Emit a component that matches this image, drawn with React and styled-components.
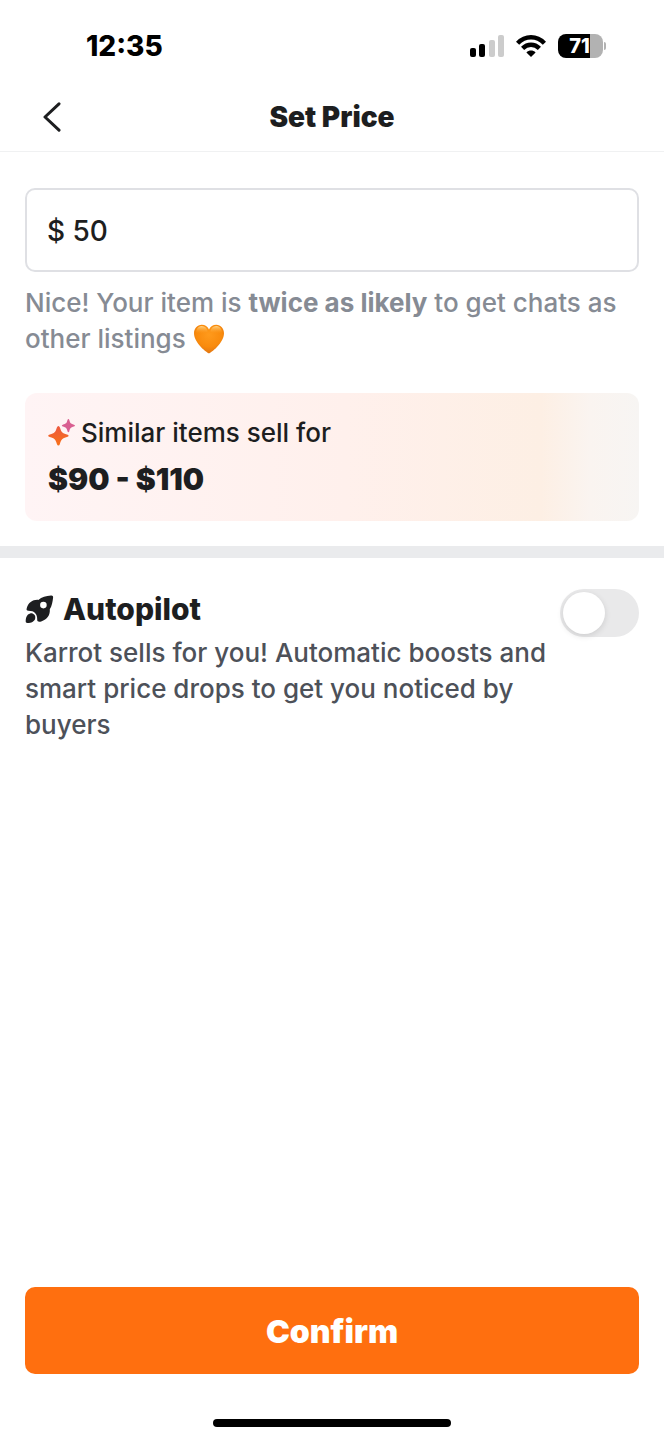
import React, { useState } from "react";
import styled, { createGlobalStyle } from "styled-components";

const GlobalStyle = createGlobalStyle`
  *, *::before, *::after { box-sizing: border-box; }
  body {
    margin: 0;
    background: #fff;
    color: #1d1e20;
    font-family: Inter, "Liberation Sans", sans-serif;
  }
  h1, h2, p { margin: 0; }
  button, input { font: inherit; color: inherit; }
`;

const Screen = styled.div`
  display: flex;
  flex-direction: column;
  min-height: 100vh;
`;

const StatusBar = styled.div`
  display: flex;
  align-items: center;
  justify-content: space-between;
  height: 84px;
  padding: 8px 58px 0 86px;
  color: #000;
`;

const Clock = styled.time`
  font-size: 28px;
  line-height: 36px;
  font-weight: 800;
`;

const StatusIcons = styled.div`
  display: flex;
  align-items: center;
  gap: 12px;
`;

const Battery = styled.div`
  display: flex;
  align-items: center;
  gap: 1px;
`;

const BatteryBody = styled.div`
  width: 45px;
  height: 24px;
  padding-right: 2px;
  border-radius: 8px;
  background: linear-gradient(90deg, #000 71%, #b2b2b2 71%);
  color: #fff;
  font-size: 20px;
  line-height: 24px;
  font-weight: 800;
  text-align: center;
`;

const BatteryTip = styled.div`
  width: 2px;
  height: 8px;
  border-radius: 0 2px 2px 0;
  background: #b2b2b2;
`;

const Header = styled.header`
  display: grid;
  grid-template-columns: 56px 1fr 56px;
  align-items: center;
  height: 68px;
  padding: 0 24px 2px;
  border-bottom: 1px solid #f0f1f2;
`;

const Title = styled.h1`
  font-size: 28px;
  line-height: 36px;
  font-weight: 900;
  text-align: center;
`;

const BackButton = styled.button`
  display: grid;
  place-items: center;
  width: 56px;
  height: 56px;
  padding: 0;
  border: 0;
  background: none;
`;

const PriceSection = styled.section`
  display: flex;
  flex-direction: column;
  padding: 36px 25px 25px;
`;

const PriceInput = styled.input`
  width: 100%;
  height: 84px;
  padding: 2px 20px 0;
  border: 2px solid #dfe0e4;
  border-radius: 10px;
  background: #fff;
  font-size: 28px;
  font-weight: 500;
  outline: none;
`;

const Hint = styled.p`
  margin-top: 13px;
  color: #868b94;
  font-size: 26px;
  line-height: 36px;
  font-weight: 500;

  strong { font-weight: 700; }
  svg { vertical-align: -6px; }
`;

const SimilarCard = styled.div`
  margin-top: 36px;
  padding: 22px 23px;
  border-radius: 12px;
  background: linear-gradient(90deg, #fff4f5 0%, #fff0ec 52%, #fdefe4 84%, #faf4f0 92%, #f7f5f3 100%);
`;

const SimilarLabel = styled.p`
  display: flex;
  align-items: center;
  gap: 6px;
  font-size: 26px;
  line-height: 36px;
  font-weight: 500;
`;

const PriceRange = styled.p`
  margin-top: 8px;
  font-size: 30px;
  line-height: 40px;
  font-weight: 900;
`;

const Divider = styled.hr`
  width: 100%;
  height: 12px;
  margin: 0;
  border: 0;
  background: #eaebed;
`;

const AutopilotSection = styled.section`
  display: flex;
  align-items: flex-start;
  justify-content: space-between;
  gap: 8px;
  padding: 31px 25px;
`;

const AutopilotTitle = styled.h2`
  display: flex;
  align-items: center;
  gap: 9px;
  font-size: 30px;
  line-height: 40px;
  font-weight: 800;
`;

const Description = styled.p`
  margin-top: 6px;
  color: #4d5159;
  font-size: 26px;
  line-height: 36px;
  font-weight: 500;
`;

const Switch = styled.input`
  appearance: none;
  flex: none;
  display: flex;
  align-items: center;
  width: 79px;
  height: 48px;
  margin: 0;
  padding: 0 3px;
  border-radius: 24px;
  background: #e9e9ea;
  cursor: pointer;

  &::before {
    content: "";
    width: 42px;
    height: 42px;
    border-radius: 50%;
    background: #fff;
    box-shadow: 0 2px 6px rgba(0, 0, 0, 0.12);
  }
  &:checked {
    justify-content: flex-end;
    background: #ff6f0f;
  }
`;

const Footer = styled.footer`
  display: flex;
  flex-direction: column;
  align-items: center;
  gap: 45px;
  margin-top: auto;
  padding: 0 25px 13px;
`;

const ConfirmButton = styled.button`
  width: 100%;
  height: 87px;
  padding: 2px 0 0;
  border: 0;
  border-radius: 10px;
  background: #ff6f0f;
  color: #fff;
  font-size: 32px;
  font-weight: 900;
`;

const HomeIndicator = styled.div`
  width: 238px;
  height: 8px;
  border-radius: 4px;
  background: #000;
`;

const SignalIcon = () => (
  <svg width="34" height="22" viewBox="0 0 34 22" aria-hidden="true">
    <rect x="0" y="13" width="6" height="9" rx="2" />
    <rect x="9" y="9" width="6" height="13" rx="2" />
    <rect x="19" y="5" width="6" height="17" rx="2" fill="#ccc" />
    <rect x="28" y="0" width="6" height="22" rx="2" fill="#ccc" />
  </svg>
);

const WifiIcon = () => (
  <svg width="30" height="22" viewBox="0 0 30 22" aria-hidden="true">
    <g fill="none" stroke="#000" strokeWidth="4.4">
      <path d="M1.6 8.2C9.2 .2 20.8 .2 28.4 8.2" />
      <path d="M6.6 13.4C11.4 8.6 18.6 8.6 23.4 13.4" />
    </g>
    <path d="M10.4 17.4C13 15 17 15 19.6 17.4L15 22Z" />
  </svg>
);

const BackIcon = () => (
  <svg width="18" height="30" viewBox="0 0 18 30" aria-hidden="true">
    <path d="M16 1.8L2 15L16 28.2" fill="none" stroke="#1d1e20" strokeWidth="3" strokeLinecap="round" strokeLinejoin="round" />
  </svg>
);

const HeartIcon = () => (
  <svg width="32" height="30" viewBox="0 0 32 30" role="img" aria-label="orange heart">
    <defs>
      <radialGradient id="heartFill" cx="0.5" cy="0.35" r="0.65">
        <stop offset="0" stopColor="#ff9a1c" />
        <stop offset="0.65" stopColor="#f98b0d" />
        <stop offset="1" stopColor="#e27612" />
      </radialGradient>
      <linearGradient id="heartShine" x1="0" y1="0" x2="0" y2="1">
        <stop offset="0" stopColor="#ffd68a" stopOpacity="0.95" />
        <stop offset="1" stopColor="#ffa22a" stopOpacity="0" />
      </linearGradient>
    </defs>
    <path
      d="M16 29.3C14.7 29.3 1 19.2 1 9.2C1 4.4 4.3 .7 8.7 .7C12 .7 14.7 2.5 16 5.6C17.3 2.5 20 .7 23.3 .7C27.7 .7 31 4.4 31 9.2C31 19.2 17.3 29.3 16 29.3Z"
      fill="url(#heartFill)"
    />
    <path d="M3 8C3.6 4 6 2 8.9 2C12 2 14 4.2 14.7 7.4C11.5 9.4 5.5 10 3 8Z" fill="url(#heartShine)" />
    <path d="M29 8C28.4 4 26 2 23.1 2C20 2 18 4.2 17.3 7.4C20.5 9.4 26.5 10 29 8Z" fill="url(#heartShine)" />
  </svg>
);

const SparkleIcon = () => (
  <svg width="27" height="28" viewBox="-1 0 27 28" aria-hidden="true">
    <defs>
      <linearGradient id="sparkleFill" x1="0" y1="0" x2="0" y2="1">
        <stop offset="0" stopColor="#ed5840" />
        <stop offset="1" stopColor="#f87118" />
      </linearGradient>
    </defs>
    <path
      d="M9.4 7Q10.4 7 10.9 8.6C12.4 13.4 13.2 14.2 18 15.5Q19.6 16 19.6 16.8Q19.6 17.6 18 18.1C13.2 19.4 12.4 20.2 10.9 25Q10.4 26.6 9.4 26.6Q8.4 26.6 7.9 25C6.4 20.2 5.6 19.4 .8 18.1Q-.8 17.6 -.8 16.8Q-.8 16 .8 15.5C5.6 14.2 6.4 13.4 7.9 8.6Q8.4 7 9.4 7Z"
      fill="url(#sparkleFill)"
    />
    <path
      d="M19.4 0Q20 0 20.3 1C21.2 4.2 21.7 4.7 25 5.7Q26 6 26 6.6Q26 7.2 25 7.5C21.7 8.5 21.2 9 20.3 12.2Q20 13.2 19.4 13.2Q18.8 13.2 18.5 12.2C17.6 9 17.1 8.5 13.8 7.5Q12.8 7.2 12.8 6.6Q12.8 6 13.8 5.7C17.1 4.7 17.6 4.2 18.5 1Q18.8 0 19.4 0Z"
      fill="#d95f91"
    />
  </svg>
);

const RocketIcon = () => (
  <svg width="29" height="28" viewBox="0 0 29 28" aria-hidden="true">
    <path
      fill="#1d1e20"
      fillRule="evenodd"
      d="M26 .6C27.4 .4 28.3 1.2 28.1 2.6C27.6 7.2 26.9 11 24.8 14.3C25.3 20 22.2 24.8 16.2 26.4C14 27 12.2 26.8 12.2 24.8C12.5 19.2 9.6 15.8 3.4 15.8C1.6 15.8 1.2 15 1.8 13.1C3.2 7.4 8.2 4.4 13.3 4.9C16.8 2 21 1 26 .6ZM18.4 6.8A3.3 3.3 0 1 0 18.4 13.4A3.3 3.3 0 1 0 18.4 6.8Z"
    />
    <path
      fill="#1d1e20"
      d="M5.2 18.4C8.3 17.8 10.9 20.3 10.2 23.4C9.4 26.8 5.8 28 2.4 27.9C1.1 27.9 .7 27.3 .7 26.2C.8 22.8 1.7 19.2 5.2 18.4Z"
    />
  </svg>
);

export default function App() {
  const [price, setPrice] = useState("$ 50");
  const [autopilot, setAutopilot] = useState(false);

  return (
    <Screen>
      <GlobalStyle />
      <StatusBar>
        <Clock>12:35</Clock>
        <StatusIcons>
          <SignalIcon />
          <WifiIcon />
          <Battery>
            <BatteryBody>71</BatteryBody>
            <BatteryTip />
          </Battery>
        </StatusIcons>
      </StatusBar>

      <Header>
        <BackButton type="button" aria-label="Back">
          <BackIcon />
        </BackButton>
        <Title>Set Price</Title>
      </Header>

      <main>
        <PriceSection>
          <PriceInput
            aria-label="Price"
            inputMode="decimal"
            value={price}
            onChange={(e) => setPrice(e.target.value)}
          />
          <Hint>
            Nice! Your item is <strong>twice as likely</strong> to get chats as other listings <HeartIcon />
          </Hint>
          <SimilarCard>
            <SimilarLabel>
              <SparkleIcon />
              Similar items sell for
            </SimilarLabel>
            <PriceRange>$90 - $110</PriceRange>
          </SimilarCard>
        </PriceSection>

        <Divider />

        <AutopilotSection>
          <div>
            <AutopilotTitle>
              <RocketIcon />
              <label htmlFor="autopilot">Autopilot</label>
            </AutopilotTitle>
            <Description id="autopilot-description">
              Karrot sells for you! Automatic boosts and smart price drops to get you noticed by buyers
            </Description>
          </div>
          <Switch
            id="autopilot"
            type="checkbox"
            role="switch"
            aria-describedby="autopilot-description"
            checked={autopilot}
            onChange={(e) => setAutopilot(e.target.checked)}
          />
        </AutopilotSection>
      </main>

      <Footer>
        <ConfirmButton type="button">Confirm</ConfirmButton>
        <HomeIndicator />
      </Footer>
    </Screen>
  );
}
